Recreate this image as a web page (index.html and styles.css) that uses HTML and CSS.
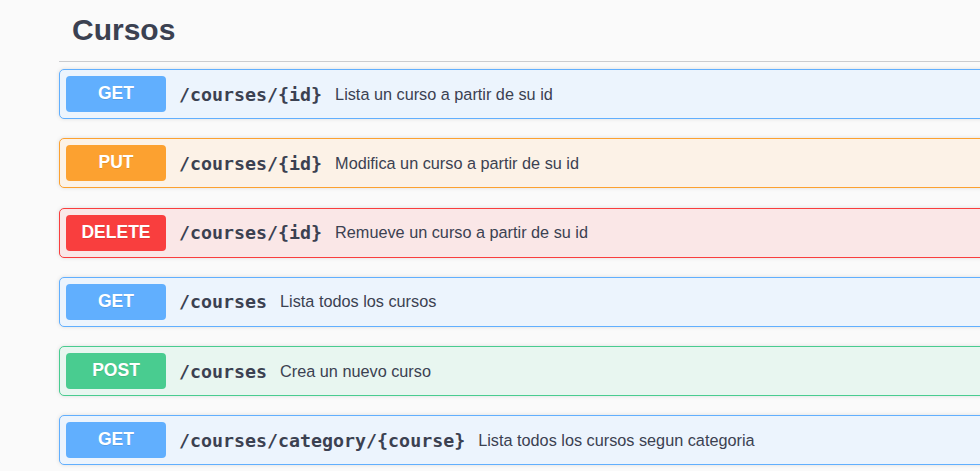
FILE: index.html
```html
<!DOCTYPE html>
<html lang="es">
<head>
<meta charset="utf-8">
<title>Cursos</title>
<link rel="stylesheet" href="styles.css">
</head>
<body>
<div class="wrapper">
  <section class="tag-section">
    <h3 class="tag-title">Cursos</h3>
    <div class="opblock opblock-get">
      <div class="summary">
        <span class="method">GET</span>
        <span class="path">/courses/{id}</span>
        <span class="desc">Lista un curso a partir de su id</span>
      </div>
    </div>
    <div class="opblock opblock-put">
      <div class="summary">
        <span class="method">PUT</span>
        <span class="path">/courses/{id}</span>
        <span class="desc">Modifica un curso a partir de su id</span>
      </div>
    </div>
    <div class="opblock opblock-delete">
      <div class="summary">
        <span class="method">DELETE</span>
        <span class="path">/courses/{id}</span>
        <span class="desc">Remueve un curso a partir de su id</span>
      </div>
    </div>
    <div class="opblock opblock-get">
      <div class="summary">
        <span class="method">GET</span>
        <span class="path">/courses</span>
        <span class="desc">Lista todos los cursos</span>
      </div>
    </div>
    <div class="opblock opblock-post">
      <div class="summary">
        <span class="method">POST</span>
        <span class="path">/courses</span>
        <span class="desc">Crea un nuevo curso</span>
      </div>
    </div>
    <div class="opblock opblock-get">
      <div class="summary">
        <span class="method">GET</span>
        <span class="path">/courses/category/{course}</span>
        <span class="desc">Lista todos los cursos segun categoria</span>
      </div>
    </div>
  </section>
</div>
</body>
</html>
```
FILE: styles.css
```css
html, body {
  margin: 0;
  padding: 0;
  background: #fafafa;
  overflow: hidden;
}

body {
  font-family: "Liberation Sans", Arial, sans-serif;
  color: #3b4151;
}

.wrapper {
  margin-left: 59px;
  width: 960px;
}

.tag-title {
  margin: 0 0 7px;
  padding: 12px 0 13px 13px;
  font-size: 30px;
  line-height: 36px;
  font-weight: 700;
  color: #3b4151;
  border-bottom: 1px solid #cbcccf;
}

.opblock {
  border: 1px solid #000;
  border-radius: 5px;
  box-shadow: 0 0 4px rgba(0, 0, 0, 0.12);
  margin-bottom: 19.25px;
}

.summary {
  display: flex;
  align-items: center;
  padding: 6px;
}

.method {
  flex: none;
  width: 100px;
  height: 36px;
  line-height: 35px;
  border-radius: 4px;
  text-align: center;
  color: #fff;
  font-size: 17.5px;
  font-weight: 700;
  text-shadow: 0 1px 0 rgba(0, 0, 0, 0.1);
}

.path {
  padding: 0 13px;
  font-family: "DejaVu Sans Mono", monospace;
  font-weight: 700;
  font-size: 18.3px;
  color: #3b4151;
}

.desc {
  font-size: 16.25px;
  line-height: 18px;
  padding-bottom: 1px;
  color: #3b4151;
}

.opblock-get {
  background: #ecf4fd;
  border-color: #61affe;
}
.opblock-get .method { background: #61affe; }

.opblock-put {
  background: #fcf2e7;
  border-color: #fca130;
}
.opblock-put .method { background: #fca130; }

.opblock-delete {
  background: #fae7e7;
  border-color: #f93e3e;
}
.opblock-delete .method { background: #f93e3e; }

.opblock-post {
  background: #e8f6f0;
  border-color: #49cc90;
}
.opblock-post .method { background: #49cc90; }
```
